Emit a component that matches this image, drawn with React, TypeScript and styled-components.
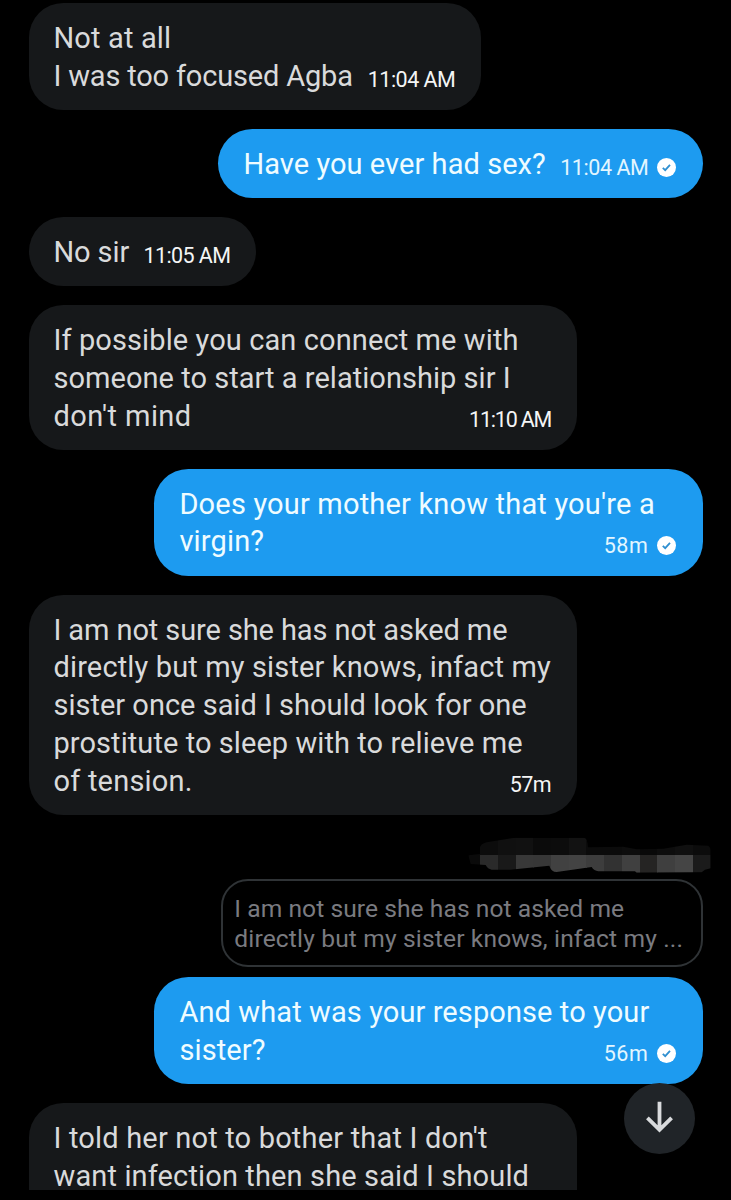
import React from 'react';
import styled, { createGlobalStyle, css } from 'styled-components';

const GlobalStyle = createGlobalStyle`
  *, *::before, *::after { box-sizing: border-box; }
  body { margin: 0; background: #000; font-family: Roboto, "Liberation Sans", sans-serif; }
`;

const Screen = styled.main`
  position: relative;
  width: 731px;
  height: 1200px;
  padding-bottom: 10px;
  background: #000;
`;

const Thread = styled.section`
  display: flex;
  flex-direction: column;
  gap: 19.2px;
  height: 100%;
  padding: 3px 28.4px 0 28.6px;
  overflow: hidden;
`;

const Bubble = styled.article<{ $own?: boolean; $width: number }>`
  flex: none;
  display: flex;
  flex-direction: column;
  width: ${(p) => p.$width}px;
  border-radius: 34.4px;
  font-size: 29px;
  line-height: 37.9px;
  white-space: nowrap;
  ${(p) =>
    p.$own
      ? css`
          align-self: flex-end;
          padding: 16.8px 26.3px 14.2px 25.3px;
          background: #1d9bf0;
          color: #effcff;
        `
      : css`
          align-self: flex-start;
          padding: 16.8px 25.5px 14.1px 24.9px;
          background: #16181a;
          color: #d9dadb;
        `}
`;

const OpenBubble = styled(Bubble)`
  border-bottom-left-radius: 0;
  border-bottom-right-radius: 0;
`;

const Line = styled.span<{ $tracking: number }>`
  letter-spacing: ${(p) => p.$tracking}px;
`;

const LastRow = styled.div`
  display: flex;
  align-items: flex-end;
  justify-content: space-between;
`;

const Meta = styled.div<{ $own?: boolean }>`
  display: flex;
  align-items: center;
  gap: 9px;
  padding-bottom: 3.6px;
  font-size: 21.5px;
  line-height: 25px;
  color: ${(p) => (p.$own ? '#e2f6ff' : '#f4f5f5')};
`;

const QuoteGroup = styled.div`
  flex: none;
  display: flex;
  flex-direction: column;
  align-items: flex-end;
  gap: 5.9px;
  padding-top: 2.9px;
`;

const Redaction = styled.svg`
  display: block;
  width: 244px;
  height: 36px;
  margin-right: -8.6px;
`;

const QuoteStack = styled.div`
  display: flex;
  flex-direction: column;
  align-items: flex-end;
  gap: 10.2px;
`;

const Quote = styled.blockquote`
  display: flex;
  flex-direction: column;
  width: 482px;
  height: 88px;
  margin: 0;
  padding: 12.5px 11.7px 0;
  border: 2px solid #2f3336;
  border-radius: 27px;
  color: #7a7b80;
  font-size: 24.6px;
  line-height: 30.7px;
  white-space: nowrap;
`;

const JumpButton = styled.button`
  position: absolute;
  top: 1082.7px;
  left: 624px;
  display: grid;
  place-items: center;
  width: 71px;
  height: 71px;
  padding: 0;
  border: 0;
  border-radius: 50%;
  background: #202428;
`;

type TextLine = [text: string, tracking: number];

interface MessageProps {
  own?: boolean;
  width: number;
  lines: TextLine[];
  time: TextLine;
}

function SentIcon() {
  return (
    <svg width="19" height="19" viewBox="0 0 19 19" aria-label="Sent">
      <circle cx="9.5" cy="9.5" r="9.5" fill="#fff" />
      <path d="M5.8 9.8 8.2 12.1 13 6.9" fill="none" stroke="#2f8fd0" strokeWidth="1.8" />
    </svg>
  );
}

function Message({ own, width, lines, time }: MessageProps) {
  const [lastText, lastTracking] = lines[lines.length - 1];
  return (
    <Bubble $own={own} $width={width}>
      {lines.slice(0, -1).map(([text, tracking]) => (
        <Line key={text} $tracking={tracking}>{text}</Line>
      ))}
      <LastRow>
        <Line $tracking={lastTracking}>{lastText}</Line>
        <Meta $own={own}>
          <Line as="time" $tracking={time[1]}>{time[0]}</Line>
          {own && <SentIcon />}
        </Meta>
      </LastRow>
    </Bubble>
  );
}

const upperCells = ['#0a0a0a', '#0c0c0c', '#101010', '#111111', '#0b0b0b', '#0c0c0c', '#121212', '#0b0b0b', '#0b0b0b', '#0d0d0d', '#090909', '#0d0d0d', '#101010', '#0c0c0c'];
const lowerCells = ['#0a0a0a', '#2a2a2a', '#191919', '#383838', '#373737', '#414141', '#434343', '#3d3d3d', '#323232', '#404040', '#252423', '#3f3f3f', '#454545', '#1b1b1b'];

function RedactedName() {
  return (
    <Redaction viewBox="21 21 732 108" aria-hidden="true">
      <clipPath id="smear">
        <path d="M25 76 60 72V52Q62 42 80 37L165 23H372Q383 25 384 52L490 50 530 58 610 56 680 44 745 47Q752 52 752 60V115L735 119 725 127 530 128 525 124H415Q402 122 395 111L290 126Q274 126 268 107L150 119H95Q83 117 77 105L32 102Z" />
      </clipPath>
      <g clipPath="url(#smear)" shapeRendering="crispEdges">
        {upperCells.map((fill, i) => (
          <rect key={i} x={7 + i * 53.2} y="20" width="54" height="55" fill={fill} />
        ))}
        {lowerCells.map((fill, i) => (
          <rect key={i} x={7 + i * 53.2} y="75" width="54" height="54" fill={fill} />
        ))}
      </g>
    </Redaction>
  );
}

export default function App() {
  return (
    <>
      <GlobalStyle />
      <Screen>
        <Thread>
          <Message width={452.3} lines={[['Not at all', 0.15], ['I was too focused Agba', -0.18]]} time={['11:04 AM', -0.5]} />
          <Message own width={484.5} lines={[['Have you ever had sex?', 0.06]]} time={['11:04 AM', -0.45]} />
          <Message width={227.3} lines={[['No sir', -0.1]]} time={['11:05 AM', -0.6]} />
          <Message
            width={548}
            lines={[['If possible you can connect me with', 0.1], ['someone to start a relationship sir I', 0.03], ["don't mind", 0.4]]}
            time={['11:10 AM', -1.2]}
          />
          <Message own width={548.5} lines={[["Does your mother know that you're a", 0.18], ['virgin?', 0.15]]} time={['58m', 0.5]} />
          <Message
            width={548}
            lines={[
              ['I am not sure she has not asked me', -0.1],
              ['directly but my sister knows, infact my', 0.14],
              ['sister once said I should look for one', 0],
              ['prostitute to sleep with to relieve me', 0.07],
              ['of tension.', 0.2],
            ]}
            time={['57m', -0.6]}
          />
          <QuoteGroup>
            <RedactedName />
            <QuoteStack>
              <Quote>
                <Line $tracking={0.06}>I am not sure she has not asked me</Line>
                <Line $tracking={0.14}>directly but my sister knows, infact my ...</Line>
              </Quote>
              <Message own width={548.5} lines={[['And what was your response to your', 0.1], ['sister?', 0.1]]} time={['56m', 0.5]} />
            </QuoteStack>
          </QuoteGroup>
          <OpenBubble $width={548}>
            <Line $tracking={0.18}>I told her not to bother that I don't</Line>
            <Line $tracking={0.13}>want infection then she said I should</Line>
          </OpenBubble>
        </Thread>
        <JumpButton aria-label="Jump to latest message">
          <svg width="30" height="34" viewBox="0 0 30 34" fill="none" stroke="#d9dbdd" strokeWidth="3.8">
            <path d="M14.5 .8V29.5M2.4 16.8 14.5 28.9 26.6 16.8" />
          </svg>
        </JumpButton>
      </Screen>
    </>
  );
}
